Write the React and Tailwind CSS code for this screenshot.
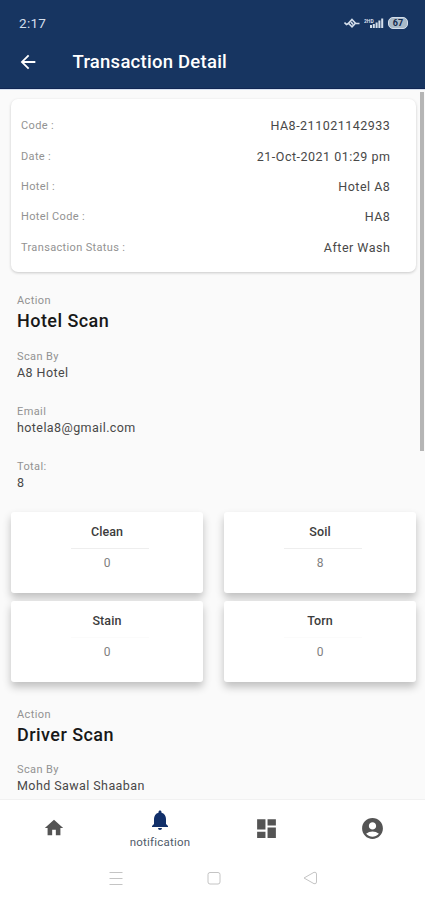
import { MdArrowBack, MdHome, MdNotifications, MdDashboard, MdAccountCircle } from "react-icons/md";

const details = [
    { label: "Code :", value: "HA8-211021142933" },
    { label: "Date :", value: "21-Oct-2021 01:29 pm" },
    { label: "Hotel :", value: "Hotel A8" },
    { label: "Hotel Code :", value: "HA8" },
    { label: "Transaction Status :", value: "After Wash" },
];

const counts = [
    { label: "Clean", value: 0, line: "bg-[#eeeeee]" },
    { label: "Soil", value: 8, line: "bg-[#eeeeee]" },
    { label: "Stain", value: 0, line: "bg-[#fbfbfb]" },
    { label: "Torn", value: 0, line: "bg-[#fbfbfb]" },
];

function StatusBar() {
    return (
        <div className="flex h-[46px] items-center justify-between pl-[19px] pr-[17px] text-[#d5dfec]">
            <span className="text-[13.5px] tracking-[0.3px]">2:17</span>
            <div className="flex items-center">
                <svg width="16" height="12" viewBox="0 0 16 12" fill="none" stroke="currentColor" strokeWidth="1.6">
                    <path d="M0.5 5.5 L2.5 7.5 L4.5 6.5 M12 6.5 H15.5" />
                    <path d="M8 2.5 L11.5 6.3 L8 9.8 L4.5 6.3 Z" />
                    <path d="M7 5 L9 7.5" />
                </svg>
                <svg className="ml-[4px]" width="20" height="12" viewBox="0 0 20 12" fill="currentColor">
                    <text x="0" y="5.5" fontSize="5" fontWeight="700" fontFamily="Roboto">2HD</text>
                    <rect x="6" y="8" width="2" height="3" />
                    <rect x="8.8" y="7" width="2" height="4" />
                    <rect x="11.6" y="5.5" width="2" height="5.5" />
                    <rect x="14.4" y="3.5" width="2" height="7.5" />
                    <rect x="17.2" y="1.5" width="2" height="9.5" />
                </svg>
                <span className="ml-[4px] flex h-[12px] w-[20px] items-center justify-center rounded-[5px] border border-[#d5dfec] bg-[#a9bac8] text-[9px] font-bold leading-none text-[#12294d]">67</span>
            </div>
        </div>
    );
}

function Field({ label, value, className }) {
    return (
        <div className={className}>
            <div className="text-[11px] leading-[14px] tracking-[0.4px] text-[#929292]">{label}</div>
            <div className="text-[12.5px] leading-[17px] tracking-[0.42px] text-[#484848]">{value}</div>
        </div>
    );
}

function ActionTitle({ title }) {
    return (
        <div>
            <div className="text-[11px] leading-[14px] tracking-[0.4px] text-[#929292]">Action</div>
            <div className="text-[18px] font-medium leading-[26px] tracking-[0.45px] text-[#181818]">{title}</div>
        </div>
    );
}

export default function App() {
    return (
        <div className="flex h-[900px] w-[425px] flex-col overflow-hidden bg-[#fafafa] font-['Roboto',sans-serif]">
            <header className="h-[89px] shrink-0 border-b border-[#102653] bg-[#173561]">
                <StatusBar />
                <div className="flex h-[31px] items-center pl-[17px]">
                    <MdArrowBack className="size-[22px] text-white" />
                    <h1 className="ml-[33.5px] pt-[2px] text-[18.5px] font-medium leading-none tracking-[0.25px] text-white">Transaction Detail</h1>
                </div>
            </header>

            <main className="relative min-h-0 flex-1 overflow-hidden border-t border-[#d7e1f1]">
                <div className="ml-[11px] mr-[9px] mt-[9px] h-[173px] rounded-[7px] bg-white pl-[10px] pr-[26px] pt-[12.5px] shadow-[0_1px_3px_rgba(0,0,0,0.2)]">
                    {details.map((d) => (
                        <div key={d.label} className="flex h-[30.35px] items-center justify-between">
                            <span className="text-[11px] tracking-[0.35px] text-[#929292]">{d.label}</span>
                            <span className="-mr-[0.4px] text-[12.5px] tracking-[0.5px] text-[#484848]">{d.value}</span>
                        </div>
                    ))}
                </div>

                <section className="px-[17px] pt-[22px]">
                    <ActionTitle title="Hotel Scan" />
                    <Field className="mt-[16px]" label="Scan By" value="A8 Hotel" />
                    <Field className="mt-[24px]" label="Email" value="hotela8@gmail.com" />
                    <Field className="mt-[24px]" label="Total:" value="8" />
                </section>

                <div className="ml-[11px] mr-[9px] mt-[21px] grid grid-cols-2 gap-x-[21px] gap-y-[8px]">
                    {counts.map((c) => (
                        <div key={c.label} className="flex h-[81px] flex-col items-center rounded-[3px] bg-white pt-[12px] shadow-[0_5px_9px_rgba(0,0,0,0.24)]">
                            <div className="text-[12.5px] font-medium leading-[16px] tracking-[0.1px] text-[#3c3c3c]">{c.label}</div>
                            <div className={`ml-[6px] mt-[8px] h-px w-[78px] ${c.line}`} />
                            <div className="mt-[6px] text-[12px] leading-[16px] text-[#808080]">{c.value}</div>
                        </div>
                    ))}
                </div>

                <section className="px-[17px] pt-[26px]">
                    <ActionTitle title="Driver Scan" />
                    <Field className="mt-[15px]" label="Scan By" value="Mohd Sawal Shaaban" />
                </section>

                {/* scroll position thumb */}
                <div className="absolute right-[1px] top-[2px] h-[359px] w-[4px] bg-[#b5b5b5]" />
            </main>

            <nav className="grid h-[57px] shrink-0 grid-cols-4 justify-items-center border-t border-[#f1f1f1] bg-white pl-px text-[#545454]">
                <MdHome className="mt-[17px] size-[22px]" />
                <div className="flex flex-col items-center text-[#12306a]">
                    <MdNotifications className="mt-[8px] size-[24px]" />
                    <span className="mt-[3px] text-[11.5px] leading-[14px] tracking-[0.2px] text-[#4f5b69]">notification</span>
                </div>
                <MdDashboard className="mt-[16px] size-[25px]" />
                <MdAccountCircle className="mt-[16px] size-[25px]" />
            </nav>

            <div className="flex h-[44px] shrink-0 items-center justify-center gap-[84px] bg-white pl-[2px] text-[#c4c4c4]">
                <svg width="14" height="14" viewBox="0 0 14 14" fill="none" stroke="currentColor">
                    <path d="M0.5 1.5 H13.5 M0.5 7.5 H13.5 M0.5 13.5 H13.5" />
                </svg>
                <svg width="14" height="14" viewBox="0 0 14 14" fill="none" stroke="currentColor">
                    <rect x="1" y="1.5" width="12" height="11.5" rx="2" />
                </svg>
                <svg className="-ml-[2px]" width="15" height="14" viewBox="0 0 15 14" fill="none" stroke="currentColor" strokeLinejoin="round">
                    <path d="M1 7 L11 1.3 Q13.5 0.8 13.5 3 V11 Q13.5 13.2 11 12.7 Z" />
                </svg>
            </div>
        </div>
    );
}
